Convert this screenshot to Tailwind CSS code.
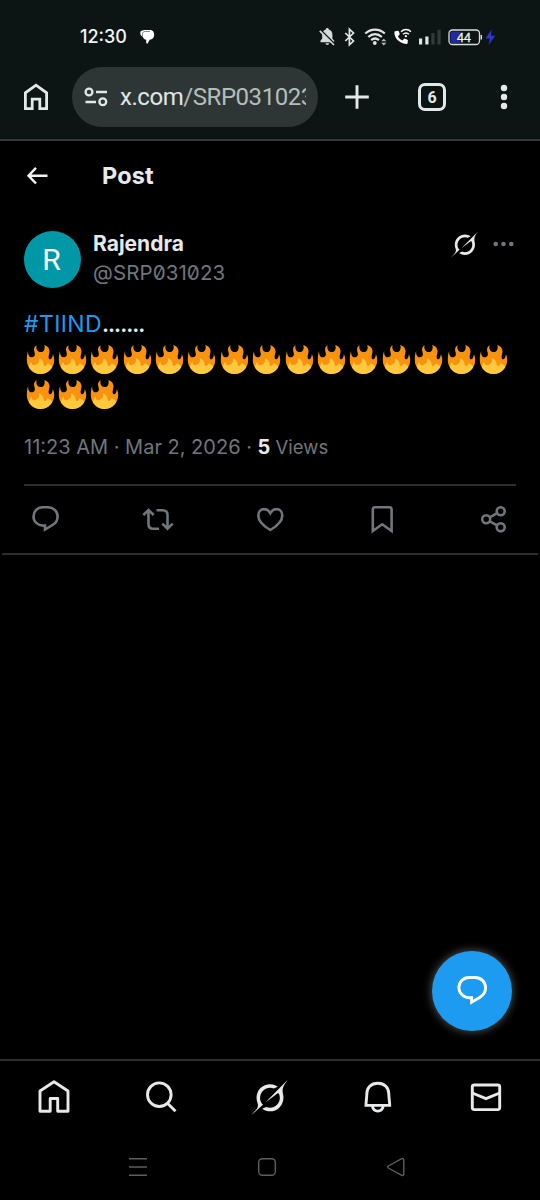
<!DOCTYPE html>
<html lang="en">
<head>
<meta charset="utf-8">
<title>Post</title>
<script src="https://cdn.jsdelivr.net/npm/@tailwindcss/browser@4"></script>
</head>
<body class="bg-black">
<svg class="hidden">
  <symbol id="fire" viewBox="0 0 82 87"><path fill="#F9930F" d="M4 18C3 30 8 37 14 37C22 37 26 31 23 22C20 12 22 5 29 1C27 10 30 18 36 20C44 23 50 20 52 15C54 9 54 4 52 0C62 3 69 11 68 21C67 30 63 37 67 42C72 46 78 38 78 27C82 36 82 42 82 46A41 41 0 0 1 0 46C0 34 1 24 4 18z"/><path fill="#FFC93F" d="M6 66C8 57 10 53 14 50C13 58 18 62 25 60C34 58 39 50 36 40C45 43 50 50 50 58C51 65 59 66 62 55C69 58 76 62 76 67C68 80 56 87 41 87S14 80 6 66z"/></symbol>
  <symbol id="grok" viewBox="0 0 33 32"><path stroke="none" fill="currentColor" d="M12.745 20.54l10.97-8.19c.539-.4 1.307-.244 1.564.38 1.349 3.288.746 7.241-1.938 9.955-2.683 2.714-6.417 3.31-9.83 1.954l-3.728 1.745c5.347 3.697 11.84 2.782 15.898-1.324 3.219-3.255 4.216-7.692 3.284-11.693l.008.009c-1.351-5.878.332-8.227 3.782-13.031L33 0l-4.54 4.59v-.014L12.743 20.544m-2.263 1.987c-3.837-3.707-3.175-9.446.1-12.755 2.42-2.449 6.388-3.448 9.852-1.979l3.72-1.737c-.67-.49-1.53-1.017-2.515-1.387-4.455-1.854-9.789-.931-13.41 2.728-3.483 3.523-4.579 8.94-2.697 13.561 1.405 3.454-.899 5.898-3.22 8.364C1.49 30.2.666 31.074 0 32l10.478-9.466"/></symbol>
  <symbol id="reply" viewBox="0 0 28 28"><path fill="none" stroke="currentColor" stroke-width="2.600" d="M10.900 2.200h5.400c5.200 0 9.500 4 9.500 9.200 0 3.700-1.800 6.700-5 8.600l-7.600 4.500v-3.900h-2c-5.200 0-9.500-4.100-9.500-9.200s4-9.200 9.200-9.200z"/></symbol>
</svg>
<main class="flex h-[1200px] w-[540px] flex-col overflow-hidden bg-black font-['Inter','Liberation_Sans',sans-serif] text-[#e7e9ea]">

  <header class="h-[141px] shrink-0 border-b-2 border-[#333937] bg-[#0d1514]">
    <div class="flex h-[67px] items-center pt-[6px] pl-20 whitespace-nowrap">
      <span class="w-[60px] text-[18px] leading-6 font-medium text-[#f2f5f4]">12:30</span>
      <svg class="h-4 w-4 shrink-0" viewBox="0 0 16 16"><path fill="#fff" d="M4.500 1h5.500c2.700 0 4.200 2.100 4.200 4.700 0 2.700-1.800 4.800-4.500 5l-2.200 4L6.200 14v-3.200c-1.700-.2-2.900-1.300-3.400-3C1 7.200.3 5.800.3 4.100c0-1.500.8-2.500 2-2.500z"/><path d="M2.500 7.200V4.900c0-1.700 1-2.400 2.700-2.400H10" fill="none" stroke="#0d1514" stroke-width=".5"/></svg>
      <svg class="ml-[162px] h-7 w-[182px] shrink-0" viewBox="318 22 182 28">
        <g fill="#d5dad9"><path d="M320.500 41.300v-1.800l1.700-1.700v-4.200c0-2.600 1.400-4.500 3.500-5 0-2.200 3.200-2.200 3.200 0 2.100.5 3.500 2.400 3.500 5v4.200l1.800 1.700v1.800zM325.500 42.200h3.600c0 2.300-3.600 2.300-3.600 0z"/></g>
        <path d="M320.500 28.800L335 43.300" stroke="#0d1514" stroke-width="1.800"/><path d="M319.800 29.800L334 44" stroke="#d5dad9" stroke-width="1.700"/>
        <path d="M345.300 32l8.200 8-4.100 3.800V28.200l4.100 3.800-8.200 8" fill="none" stroke="#e0e4e3" stroke-width="1.700"/>
        <g fill="none" stroke="#e0e4e3" stroke-width="2.200"><path d="M365.300 32.500c5.500-5.300 14-5.300 19.500 0M368.300 36c4-3.800 9.500-3.800 13.500 0M371.200 39.200c2.500-2.200 5.200-2.200 7.700 0"/></g>
        <circle cx="374.800" cy="42" r="1.900" fill="#e0e4e3"/>
        <path d="M381.200 40.300l2.600-2.600 2.600 2.600zM381.200 41.800l2.600 2.600 2.600-2.600z" fill="#b5bab9"/>
        <path d="M395.200 30.300l2.600-.6c.6 0 .9.200 1.100.8l.9 2.700-1.800 2c1 2 2.400 3.400 4.400 4.300l1.900-1.900 2.700.9c.7.2 1 .6.900 1.200l-.3 2.200c-.1.800-.6 1.100-1.400 1.100-6.500-.3-12-6-11.800-11.700 0-.5.300-.9.800-1z" fill="#fff"/>
        <path d="M401 30.700c3-2.900 7.200-2.900 9.900 0M403 33.300c1.900-1.700 4.200-1.700 5.900 0" fill="none" stroke="#fff" stroke-width="1.400"/><circle cx="405.900" cy="35.200" r="1.100" fill="#fff"/>
        <path fill="#e0e4e3" d="M419 37.500h3.200V43.500H419zM425.300 35.500h3.200v8h-3.200z"/><path fill="#333b3a" d="M431.300 32h3.200v11.500h-3.200zM437.500 28.800h3.200v14.700h-3.200z"/>
        <rect x="449" y="29" width="30.500" height="14.500" rx="3.500" fill="#0d1514" stroke="#d8dedc" stroke-width="1.300"/>
        <path fill="#2029a0" d="M452.500 30.500h7.500V42h-7.500a2 2 0 0 1-2-2v-7.500a2 2 0 0 1 2-2z"/>
        <path d="M481.300 34v4.500" stroke="#d8dedc" stroke-width="1.500"/>
        <text x="464" y="40.600" text-anchor="middle" font-family="Liberation Sans" font-size="12.500" fill="#f0f4f4" stroke="#f0f4f4" stroke-width=".3">44</text>
        <path fill="#3035d8" d="M491.500 28.500l-5.800 9h4.300l-1.500 6.500 6.700-9.200h-4.300z"/>
      </svg>
    </div>
    <div class="flex h-[60px] items-center">
      <svg class="ml-6 h-7 w-6 shrink-0" viewBox="0 0 24 28"><path d="M1.400 25.700V9.800L12 2.200l10.600 7.600v15.900h-6.800v-9.500H8.200v9.500z" fill="none" stroke="#e3e9e7" stroke-width="2.800"/></svg>
      <div class="ml-6 flex h-[60px] w-[246px] shrink-0 items-center overflow-hidden rounded-full bg-[#2e3635] pl-[12px]">
        <svg class="h-6 w-6 shrink-0" viewBox="0 0 24 24"><g fill="none" stroke="#e3e9e7" stroke-width="2.300"><circle cx="5" cy="7" r="3.400"/><circle cx="18.800" cy="16.800" r="3.400"/><path d="M12 7h11M1.500 17h10.500"/></g></svg>
        <span class="ml-[12px] w-[186px] shrink-0 overflow-hidden font-[Roboto] text-[24px] leading-8 tracking-[-0.450px] whitespace-nowrap text-[#b4bdbb]"><span class="text-[#e0e6e4]">x.com</span>/SRP031023</span>
      </div>
      <svg class="ml-[26px] h-[26px] w-[26px] shrink-0" viewBox="0 0 26 26"><path d="M13 1.200v23.600M1.200 13h23.600" stroke="#e3e9e7" stroke-width="2.900"/></svg>
      <div class="ml-[48px] flex h-[28px] w-[28px] shrink-0 items-center justify-center rounded-[7px] border-[3px] border-[#e3e9e7] pt-[1px] font-[Roboto] text-[16px] font-bold text-[#e3e9e7]">6</div>
      <svg class="ml-[54px] h-[26px] w-[8px]" viewBox="0 0 8 26"><g fill="#e3e9e7"><circle cx="4" cy="4" r="3.200"/><circle cx="4" cy="13" r="3.200"/><circle cx="4" cy="22" r="3.200"/></g></svg>
    </div>
  </header>

  <div class="flex h-[69px] shrink-0 items-center pl-[26px]">
    <svg class="h-6 w-6" viewBox="0 0 24 24"><path d="M10 3.900L2.500 11.700l7.500 7.800M2.500 11.700h19" fill="none" stroke="#eff3f4" stroke-width="2.400"/></svg>
    <h1 class="ml-[52px] text-[23.500px] leading-8 font-bold tracking-[0.150px]">Post</h1>
  </div>

  <article class="flex h-[344px] shrink-0 flex-col px-6 pt-[20.500px]">
    <div class="flex h-[58px]">
      <div class="flex h-[57px] w-[57px] shrink-0 items-center justify-center rounded-full bg-[#0097a7] pr-[2px] font-[Roboto] text-[30px] text-white">R</div>
      <div class="ml-[12px] flex-1 whitespace-nowrap">
        <div class="-mt-[1px] text-[21px] leading-[28px] font-bold">Rajendra</div>
        <div class="mt-[1px] text-[20.500px] leading-[28px] tracking-[0.100px] text-[#71767b] [font-feature-settings:'zero']">@SRP031023</div>
      </div>
      <svg class="mt-[0.500px] h-[27px] w-[27px] text-[#e7e9ea]"><use href="#grok"/></svg>
      <svg class="mt-[9.500px] mr-[2.500px] ml-[14.500px] h-[8px] w-[21px]" viewBox="0 0 21 8"><g fill="#71767b"><circle cx="2.700" cy="4" r="2.300"/><circle cx="10.500" cy="4" r="2.300"/><circle cx="18.300" cy="4" r="2.300"/></g></svg>
    </div>
    <div class="mt-[18.500px] h-[34px] text-[23px] leading-[34px] whitespace-nowrap"><span class="tracking-[0.400px] text-[#1d9bf0]">#TIIND</span><span class="text-[22px] font-semibold tracking-[-1px]">.......</span></div>
    <div class="ml-[1.500px] flex w-[490px] flex-wrap gap-x-[3.400px] gap-y-[5.500px] pt-[4px]" id="flames"></div>
    <div class="mt-[24px] text-[20px] leading-[28px] whitespace-nowrap text-[#71767b]"><span>11:23 AM · Mar 2, 2026 · </span><b class="font-bold text-[#e7e9ea]">5</b><span class="text-[18.500px]"> Views</span></div>
  </article>

  <div class="mx-[2px] -mt-[70px] shrink-0 border-b-2 border-[#2c2d2f] px-[22px]">
    <div class="border-t-2 border-[#2c2d2f]">
      <svg class="block h-[67px] w-[492px] text-[#71767b]" viewBox="24 486 492 67" fill="none" stroke="#71767b" stroke-width="2.600">
        <use href="#reply" x="31.800" y="505" width="28" height="28"/>
        <path d="M143.300 515l5.200-5 5.200 5M148.500 510.500v13.500c0 3.300 1.500 4.700 4.500 4.700h6M156.500 510.200h6c3.300 0 5 1.500 5 4.700v13.200M162.300 523.600l5.200 5 5.200-5"/>
        <path d="M270.300 530c-7.500-4.500-12-9.300-12-14.600 0-3.800 2.600-6.300 5.800-6.300 2.500 0 4.700 1.400 6.200 4.100 1.500-2.700 3.700-4.100 6.200-4.100 3.200 0 5.800 2.500 5.800 6.300 0 5.300-4.500 10.100-12 14.600z"/>
        <path d="M372.800 531v-21.500c0-1.500.7-2.200 2.200-2.200h14.400c1.500 0 2.200.7 2.200 2.200V531l-9.400-6.700z"/>
        <circle cx="486.200" cy="519.300" r="4"/><circle cx="500.700" cy="511.300" r="4"/><circle cx="500.700" cy="527.300" r="4"/><path d="M489.700 517.300l7.500-4.100M489.700 521.300l7.500 4.100"/>
      </svg>
    </div>
  </div>

  <div class="flex flex-1 items-end justify-end pr-[28px] pb-[28px]">
    <div class="flex h-20 w-20 items-center justify-center rounded-full bg-[#1d9bf0] shadow-[0_0_9px_1px_rgba(255,255,255,0.300)]">
      <svg class="-mt-[1px] h-[31px] w-[31px] text-white"><use href="#reply"/></svg>
    </div>
  </div>

  <nav class="flex h-[75px] shrink-0 border-t-2 border-[#2c2d2f]">
    <svg class="block h-[73px] w-[540px] text-[#e7e9ea]" viewBox="0 1061 540 73" fill="none" stroke="#e7e9ea" stroke-width="2.900">
      <path stroke-linejoin="round" d="M40 1111.300V1091l14-9.200 14 9.200v20.300H57.700v-12.800h-7.500v12.800z"/>
      <circle cx="159.300" cy="1094.700" r="11.800"/><path d="M167.500 1103.200l8 8"/>
      <use href="#grok" x="251.500" y="1079.500" width="36" height="36"/>
      <path d="M366 1105.400c0-4 .8-7.500.8-11.400 0-6.300 4.200-10.700 11-10.700s11 4.400 11 10.700c0 3.900.9 7.400.9 11.400zM372.300 1106c.8 3.500 2.700 5.100 5.500 5.100s4.700-1.600 5.500-5.100"/>
      <rect x="472.300" y="1085" width="27.400" height="24.600" rx="2"/><path d="M472.300 1093l13.700 5.700 13.700-5.700"/>
    </svg>
  </nav>
  <div class="flex h-[66px] shrink-0">
    <svg class="block h-[66px] w-[540px]" viewBox="0 1134 540 66" fill="none" stroke="#5e5e5e" stroke-width="1.400">
      <path d="M129 1158.700h18M129 1167h18M129 1175.300h18"/>
      <rect x="258.700" y="1158.700" width="16.600" height="16.600" rx="3.500"/>
      <path stroke-linejoin="round" d="M388.300 1166c-1 .6-1 1.400 0 2l13 7.100c1.300.7 2.500.2 2.500-1.200v-13.800c0-1.400-1.200-1.900-2.500-1.200z"/>
    </svg>
  </div>
</main>
<script>
  document.getElementById('flames').innerHTML =
    '<svg class="h-[29px] w-[29px] shrink-0" role="img" aria-label="fire"><use href="#fire"/></svg>'.repeat(18);
</script>
</body>
</html>
